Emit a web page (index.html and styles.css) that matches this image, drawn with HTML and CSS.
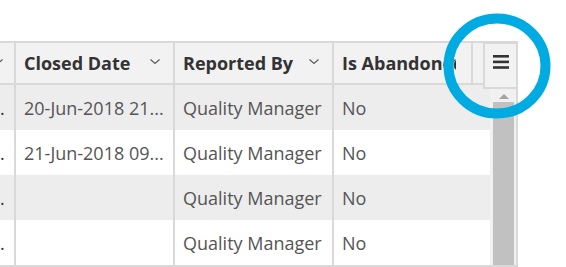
FILE: index.html
```html
<!DOCTYPE html>
<html>
<head>
<meta charset="utf-8">
<link rel="stylesheet" href="styles.css">
</head>
<body>
<div class="grid">
  <div class="header">
    <div class="hcell c0"><svg class="chev chev-cut" viewBox="0 0 10 5"><polyline points="0.5,0.5 5,4.5 9.5,0.5"/></svg></div>
    <div class="hcell c1"><span class="label">Closed Date</span><svg class="chev" viewBox="0 0 10 5"><polyline points="0.5,0.5 5,4.5 9.5,0.5"/></svg></div>
    <div class="hcell c2"><span class="label">Reported By</span><svg class="chev" viewBox="0 0 10 5"><polyline points="0.5,0.5 5,4.5 9.5,0.5"/></svg></div>
    <div class="hcell c3"><span class="label label-clip">Is Abandoned</span><svg class="chev chev-over" viewBox="0 0 10 5"><polyline points="0.5,0.5 5,4.5 9.5,0.5"/></svg></div>
    <div class="hfill"></div>
  </div>
  <div class="body">
    <div class="rows">
      <div class="row odd">
        <div class="cell c0">.</div>
        <div class="cell c1">20-Jun-2018 21...</div>
        <div class="cell c2">Quality Manager</div>
        <div class="cell c3">No</div>
      </div>
      <div class="row">
        <div class="cell c0">.</div>
        <div class="cell c1">21-Jun-2018 09...</div>
        <div class="cell c2">Quality Manager</div>
        <div class="cell c3">No</div>
      </div>
      <div class="row odd">
        <div class="cell c0">.</div>
        <div class="cell c1"></div>
        <div class="cell c2">Quality Manager</div>
        <div class="cell c3">No</div>
      </div>
      <div class="row">
        <div class="cell c0">.</div>
        <div class="cell c1"></div>
        <div class="cell c2">Quality Manager</div>
        <div class="cell c3">No</div>
      </div>
    </div>
    <div class="vscroll">
      <div class="arrow"><span class="tri"></span></div>
      <div class="thumb"></div>
    </div>
  </div>
  <div class="menu">
    <svg class="burger" viewBox="0 0 16 14"><rect x="0" y="0" width="16" height="2.6"/><rect x="0" y="5.6" width="16" height="2.6"/><rect x="0" y="11.2" width="16" height="2.6"/></svg>
  </div>
  <svg class="highlight" viewBox="0 0 108 106"><ellipse cx="54" cy="53" rx="48.5" ry="47.5"/></svg>
</div>
</body>
</html>
```
FILE: styles.css
```css
html, body {
  margin: 0;
  padding: 0;
  background: #ffffff;
}
body {
  width: 566px;
  height: 267px;
  overflow: hidden;
  font-family: "Open Sans", "Noto Sans", sans-serif;
  font-size: 18px;
}
.grid {
  position: relative;
  margin-top: 41px;
  width: 518px;
  box-sizing: border-box;
  border-top: 2px solid #d9d9d9;
  border-right: 2px solid #d9d9d9;
  border-bottom: 2px solid #d9d9d9;
}
.header {
  display: flex;
  height: 40px;
  background: #f2f2f2;
  border-bottom: 2px solid #d9d9d9;
}
.hcell {
  position: relative;
  display: flex;
  align-items: center;
  box-sizing: border-box;
  padding-left: 8px;
  border-right: 2px solid #d9d9d9;
  color: #333333;
  font-weight: 700;
  overflow: hidden;
  white-space: nowrap;
}
.label {
  flex: 1;
  min-width: 0;
}
.label-clip {
  flex: none;
  width: 114px;
  overflow: hidden;
}
.c0 { width: 16px; flex: none; padding-left: 0; }
.c1 { width: 159px; flex: none; }
.c2 { width: 159px; flex: none; }
.c3 { width: 139px; flex: none; }
.hfill { flex: 1; }
.chev {
  width: 10px;
  height: 5px;
  flex: none;
  margin-right: 13px;
  margin-top: -3px;
  fill: none;
  stroke: #555555;
  stroke-width: 1.1;
}
.chev-cut { margin-left: -7px; }
.chev-over { margin-left: -10px; }
.body {
  display: flex;
  height: 180px;
}
.rows {
  flex: 1;
  display: flex;
  flex-direction: column;
}
.row {
  display: flex;
  height: 45px;
  background: #ffffff;
}
.row.odd { background: #ededed; }
.cell {
  display: flex;
  align-items: center;
  box-sizing: border-box;
  padding-left: 8px;
  color: #555555;
  white-space: nowrap;
  overflow: hidden;
  border-right: 2px solid #d9d9d9;
}
.row .c0 { padding-left: 0; color: #333; }
.row .c3 { flex: 1; width: auto; border-right: none; }
.vscroll {
  width: 26px;
  box-sizing: border-box;
  background: #f1f1f1;
  padding: 0 2px 0 3px;
  display: flex;
  flex-direction: column;
}
.arrow {
  height: 17px;
  display: flex;
  justify-content: center;
  align-items: flex-end;
  padding-bottom: 3px;
  box-sizing: border-box;
}
.tri {
  width: 0;
  height: 0;
  border-left: 5.5px solid transparent;
  border-right: 5.5px solid transparent;
  border-bottom: 5px solid #a3a3a3;
}
.thumb {
  flex: 1;
  background: #c1c1c1;
}
.menu {
  position: absolute;
  top: -1px;
  right: -2px;
  width: 35px;
  height: 47px;
  box-sizing: border-box;
  background: #f2f2f2;
  border: 2px solid #d9d9d9;
  display: flex;
  justify-content: center;
  padding-top: 11px;
}
.burger {
  width: 16px;
  height: 14px;
  fill: #333333;
}
.highlight {
  position: absolute;
  left: 443px;
  top: -30px;
  width: 108px;
  height: 106px;
  fill: none;
  stroke: #00abe1;
  stroke-width: 10;
}
```
